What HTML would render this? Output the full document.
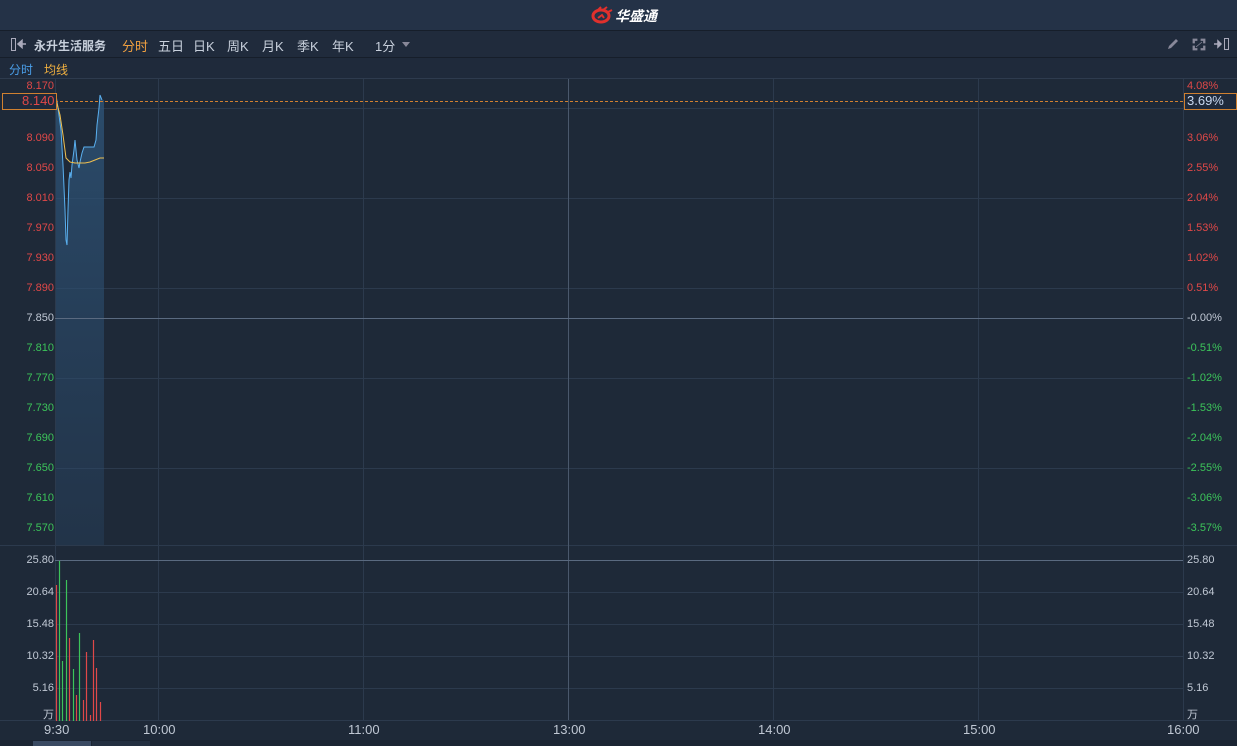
<!DOCTYPE html><html><head><meta charset="utf-8"><style>
body{margin:0;width:1237px;height:746px;background:#1e2938;font-family:"Liberation Sans","Noto Sans CJK SC",sans-serif;overflow:hidden;position:relative}
.a{position:absolute}
.l{position:absolute;font-size:11px;color:#e04848;text-align:right;width:48px;left:6px}
.r{position:absolute;font-size:11px;color:#e04848;left:1187px}
.l.g,.r.g{color:#3cc45a}.l.w,.r.w,.a.w{color:#c0c8d4}
.t{position:absolute;font-size:13px;color:#c8d0dc;top:36px}
</style></head><body>
<div class="a" style="left:0;top:0;width:1237px;height:30px;background:#243247;border-bottom:1px solid #161e2a"></div>
<svg class="a" style="left:590px;top:6px" width="24" height="18" viewBox="0 0 24 18"><path d="M3 10a8 6 0 1 0 16 0a8 6 0 1 0 -16 0z" fill="none" stroke="#e0302c" stroke-width="3"/><path d="M8 4l3-3M13 4l4-3M18 6l4-2" stroke="#e0302c" stroke-width="2"/><path d="M8 12l4-3l2 3" stroke="#e0302c" stroke-width="2" fill="none"/></svg>
<div class="a" style="left:615px;top:6px;color:#fff;font-weight:bold;font-size:14px;font-style:italic">华盛通</div>
<div class="a" style="left:0;top:31px;width:1237px;height:26px;background:#202b3c;border-bottom:1px solid #161e2a"></div>
<div class="a" style="left:11px;top:38px;width:3px;height:11px;border:1px solid #aab"></div>
<svg class="a" style="left:17px;top:39px" width="10" height="10"><path d="M1 5H9M1 5L5 1.5V8.5Z" stroke="#aab" fill="#aab" stroke-width="1.5"/></svg>
<div class="t" style="left:34px;font-weight:bold;font-size:12px;top:37px">永升生活服务</div>
<div class="t" style="left:122px;color:#f0a040">分时</div>
<div class="t" style="left:158px">五日</div><div class="t" style="left:193px">日K</div><div class="t" style="left:227px">周K</div><div class="t" style="left:262px">月K</div><div class="t" style="left:297px">季K</div><div class="t" style="left:332px">年K</div><div class="t" style="left:375px">1分</div>
<div class="a" style="left:402px;top:42px;border:4px solid transparent;border-top:5px solid #889"></div>
<svg class="a" style="left:1166px;top:37px" width="70" height="14">
<path d="M2 12L3 9L10 2L12 4L5 11Z" fill="#889"/>
<path d="M27 2h4v1.5h-2.5v2.5h-1.5zM39 2h-4v1.5h2.5v2.5h1.5zM27 13h4v-1.5h-2.5v-2.5h-1.5zM39 13h-4v-1.5h2.5v-2.5h1.5zM30 10l6-5" fill="#889" stroke="#889" stroke-width="0.8"/>
<path d="M48 7H55M55 7L52 4V10Z" stroke="#aab" fill="#aab" stroke-width="1.5"/>
<rect x="58.5" y="1.5" width="4" height="11" fill="none" stroke="#aab"/>
</svg>
<div class="a" style="left:0;top:58px;width:1237px;height:20px;background:#1f2a3b;border-bottom:1px solid #2e3b4e"></div>
<div class="a" style="left:9px;top:61px;font-size:12px;color:#4a9ee8">分时</div>
<div class="a" style="left:44px;top:61px;font-size:12px;color:#f0b040">均线</div>
<svg class="a" style="left:0;top:0" width="1237" height="746">
<defs><linearGradient id="f" x1="0" y1="0" x2="0" y2="1"><stop offset="0" stop-color="#2e5478" stop-opacity="0.8"/><stop offset="1" stop-color="#2a4868" stop-opacity="0.35"/></linearGradient></defs>
<g stroke="#2c3a4d" stroke-width="1">
<line x1="55" y1="108.5" x2="1183" y2="108.5"/><line x1="55" y1="198.5" x2="1183" y2="198.5"/><line x1="55" y1="288.5" x2="1183" y2="288.5"/><line x1="55" y1="378.5" x2="1183" y2="378.5"/><line x1="55" y1="468.5" x2="1183" y2="468.5"/>
<line x1="55" y1="592.5" x2="1183" y2="592.5"/><line x1="55" y1="624.5" x2="1183" y2="624.5"/><line x1="55" y1="656.5" x2="1183" y2="656.5"/><line x1="55" y1="688.5" x2="1183" y2="688.5"/>
<line x1="158.5" y1="79" x2="158.5" y2="720"/><line x1="363.5" y1="79" x2="363.5" y2="720"/><line x1="773.5" y1="79" x2="773.5" y2="720"/><line x1="978.5" y1="79" x2="978.5" y2="720"/><line x1="1183.5" y1="79" x2="1183.5" y2="720"/><line x1="55.5" y1="79" x2="55.5" y2="720"/>
<line x1="0" y1="720.5" x2="1237" y2="720.5"/><line x1="0" y1="545.5" x2="1237" y2="545.5"/>
</g>
<line x1="568.5" y1="79" x2="568.5" y2="720" stroke="#4a586c"/>
<path d="M56,95 58,108 61,130 63,165 65,210 66,240 67,245 68,210 69,180 70,172 71,178 72,165 74,150 75,140 77,160 79,168 80,162 82,153 84,147 94,147 96,140 97,125 99,108 100,95 102,100 104,100 104,545 56,545Z" fill="url(#f)"/>
<line x1="55" y1="318.5" x2="1183" y2="318.5" stroke="#5a6a80"/>
<line x1="55" y1="560.5" x2="1183" y2="560.5" stroke="#5a6a80"/>
<polyline points="56,95 58,108 61,130 63,165 65,210 66,240 67,245 68,210 69,180 70,172 71,178 72,165 74,150 75,140 77,160 79,168 80,162 82,153 84,147 94,147 96,140 97,125 99,108 100,95 102,100" fill="none" stroke="#5ab0f0" stroke-width="1"/>
<polyline points="56,100 60,115 63,135 66,158 70,162 75,163 85,163 90,162 95,160 100,158 104,158" fill="none" stroke="#f0c050" stroke-width="1"/>
<line x1="55" y1="101.5" x2="1183" y2="101.5" stroke="#d08030" stroke-dasharray="3,2"/>
<g stroke-width="1.2">
<line x1="56.5" y1="585" x2="56.5" y2="721" stroke="#e04848"/><line x1="59.5" y1="561" x2="59.5" y2="721" stroke="#3cc45a"/><line x1="62.5" y1="661" x2="62.5" y2="721" stroke="#3cc45a"/><line x1="66.5" y1="580" x2="66.5" y2="721" stroke="#3cc45a"/><line x1="69.5" y1="638" x2="69.5" y2="721" stroke="#e04848"/><line x1="73.5" y1="669" x2="73.5" y2="721" stroke="#3cc45a"/><line x1="76.5" y1="695" x2="76.5" y2="721" stroke="#e04848"/><line x1="79.5" y1="633" x2="79.5" y2="721" stroke="#3cc45a"/><line x1="83.5" y1="700" x2="83.5" y2="721" stroke="#e04848"/><line x1="86.5" y1="652" x2="86.5" y2="721" stroke="#e04848"/><line x1="90.5" y1="715" x2="90.5" y2="721" stroke="#e04848"/><line x1="93.5" y1="640" x2="93.5" y2="721" stroke="#e04848"/><line x1="96.5" y1="668" x2="96.5" y2="721" stroke="#e04848"/><line x1="100.5" y1="702" x2="100.5" y2="721" stroke="#e04848"/>
</g>
</svg>
<div class="a" style="left:2px;top:93px;width:53px;height:15px;border:1px solid #d08030;background:#1f2a3b"></div>
<div class="a" style="left:22px;top:93px;font-size:13px;color:#e04848">8.140</div>
<div class="a" style="left:1184px;top:93px;width:51px;height:15px;border:1px solid #d08030;background:#1f2a3b"></div>
<div class="a" style="left:1187px;top:93px;font-size:13px;color:#c8d8f0">3.69%</div>
<div class="l" style="top:80px">8.170</div><div class="l" style="top:132px">8.090</div><div class="l" style="top:162px">8.050</div><div class="l" style="top:192px">8.010</div><div class="l" style="top:222px">7.970</div><div class="l" style="top:252px">7.930</div><div class="l" style="top:282px">7.890</div>
<div class="l w" style="top:312px">7.850</div>
<div class="l g" style="top:342px">7.810</div><div class="l g" style="top:372px">7.770</div><div class="l g" style="top:402px">7.730</div><div class="l g" style="top:432px">7.690</div><div class="l g" style="top:462px">7.650</div><div class="l g" style="top:492px">7.610</div><div class="l g" style="top:522px">7.570</div>
<div class="r" style="top:80px">4.08%</div><div class="r" style="top:132px">3.06%</div><div class="r" style="top:162px">2.55%</div><div class="r" style="top:192px">2.04%</div><div class="r" style="top:222px">1.53%</div><div class="r" style="top:252px">1.02%</div><div class="r" style="top:282px">0.51%</div>
<div class="r w" style="top:312px">-0.00%</div>
<div class="r g" style="top:342px">-0.51%</div><div class="r g" style="top:372px">-1.02%</div><div class="r g" style="top:402px">-1.53%</div><div class="r g" style="top:432px">-2.04%</div><div class="r g" style="top:462px">-2.55%</div><div class="r g" style="top:492px">-3.06%</div><div class="r g" style="top:522px">-3.57%</div>
<div class="l w" style="top:554px">25.80</div><div class="l w" style="top:586px">20.64</div><div class="l w" style="top:618px">15.48</div><div class="l w" style="top:650px">10.32</div><div class="l w" style="top:682px">5.16</div><div class="l w" style="top:706px">万</div>
<div class="r w" style="top:554px">25.80</div><div class="r w" style="top:586px">20.64</div><div class="r w" style="top:618px">15.48</div><div class="r w" style="top:650px">10.32</div><div class="r w" style="top:682px">5.16</div><div class="r w" style="top:706px">万</div>
<div class="a w" style="top:722px;left:44px;font-size:13px">9:30</div>
<div class="a w" style="top:722px;left:143px;font-size:13px">10:00</div>
<div class="a w" style="top:722px;left:348px;font-size:13px">11:00</div>
<div class="a w" style="top:722px;left:553px;font-size:13px">13:00</div>
<div class="a w" style="top:722px;left:758px;font-size:13px">14:00</div>
<div class="a w" style="top:722px;left:963px;font-size:13px">15:00</div>
<div class="a w" style="top:722px;left:1167px;font-size:13px">16:00</div>
<div class="a" style="left:0;top:740px;width:1237px;height:6px;background:#1a2432"></div>
<div class="a" style="left:33px;top:741px;width:58px;height:5px;background:#3a4a62"></div>
<div class="a" style="left:92px;top:741px;width:58px;height:5px;background:#232f40"></div>
</body></html>
